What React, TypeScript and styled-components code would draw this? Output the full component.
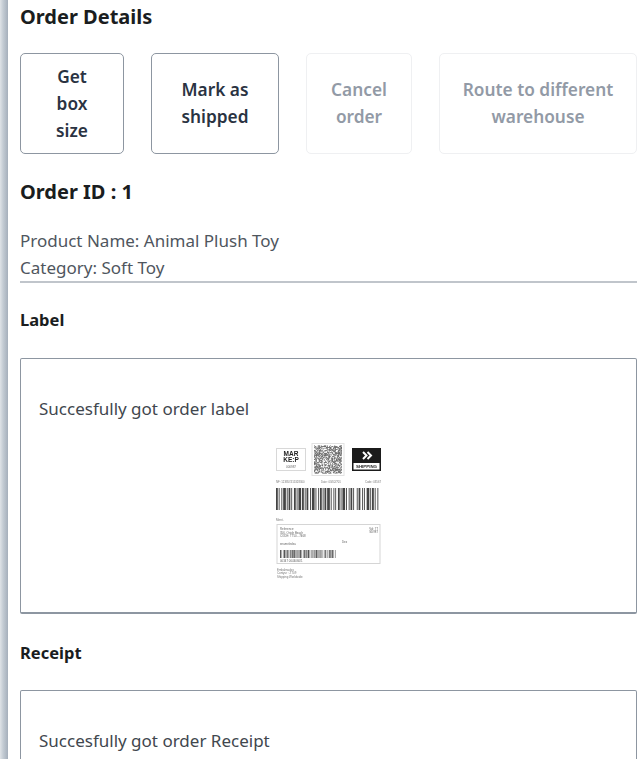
import React from 'react';
import styled, { createGlobalStyle } from 'styled-components';

const GlobalStyle = createGlobalStyle`
  html, body {
    margin: 0;
    padding: 0;
    height: 100%;
    overflow: hidden;
    background: #fff;
  }
  body {
    font-family: "Noto Sans", "Open Sans", sans-serif;
    color: #212529;
  }
`;

const Page = styled.div`
  height: 759px;
  overflow: hidden;
  box-sizing: border-box;
  padding: 0 3px 0 20px;
  position: relative;
  &::before {
    content: '';
    position: absolute;
    left: 0;
    top: 0;
    bottom: 0;
    width: 8px;
    background: linear-gradient(90deg, #dfe3e7 0%, #c3cbd3 40%, #a5afbb 100%);
  }
`;

const Title = styled.h1`
  margin: 0;
  padding-top: 4px;
  font-size: 20px;
  line-height: 26px;
  font-weight: 700;
  color: #1a1d20;
`;

const ButtonRow = styled.div`
  display: flex;
  gap: 27px;
  margin-top: 23px;
`;

const ActionButton = styled.button<{ $width: number; $narrow?: boolean }>`
  box-sizing: border-box;
  width: ${(p) => p.$width}px;
  height: 101px;
  padding: ${(p) => (p.$narrow ? '0 26px' : '0 12px 2px')};
  background: #fff;
  border: 1px solid ${(p) => (p.disabled ? '#eff0f2' : '#8d96a1')};
  border-radius: 5px;
  font-family: inherit;
  font-size: 17.3px;
  font-weight: 600;
  line-height: 27px;
  color: ${(p) => (p.disabled ? '#929aa6' : '#2a3342')};
`;

const OrderId = styled.h2`
  margin: 25px 0 0;
  font-size: 20px;
  line-height: 26px;
  font-weight: 700;
  color: #1a1d20;
`;

const Info = styled.div`
  margin-top: 22px;
  border-bottom: 2px solid #c0c5cb;
  font-size: 17px;
  line-height: 27px;
  color: #4f565e;
`;

const SectionLabel = styled.h3<{ $top: number }>`
  margin: ${(p) => p.$top}px 0 0;
  font-size: 16.5px;
  line-height: 24px;
  font-weight: 700;
  color: #1a1d20;
`;

const ResultBox = styled.div<{ $height: number; $top: number }>`
  box-sizing: border-box;
  height: ${(p) => p.$height}px;
  margin-top: ${(p) => p.$top}px;
  padding: 38px 18px 0;
  background: #fff;
  border: 1px solid #8d96a1;
  border-bottom-width: 2px;
  border-radius: 2px;
`;

const ResultText = styled.p`
  margin: 0;
  font-size: 17px;
  line-height: 24px;
  color: #41474e;
`;

const LabelWrap = styled.div`
  display: flex;
  justify-content: center;
  margin-top: 22px;
  svg {
    filter: blur(0.45px);
  }
`;

const barWidths = [
  2, 1, 1, 2, 1, 1, 3, 1, 1, 1, 2, 1, 1, 2, 2, 1, 1, 1, 3, 1, 2, 1, 1, 1, 2, 2, 1, 1, 3, 1, 1, 2, 1, 1, 2, 1, 1, 1, 2, 1, 3, 1, 1, 2, 1, 1,
  1, 2, 2, 1, 1, 1, 3, 1, 1, 2, 1, 1, 2, 1, 1, 3, 1, 1, 2, 2, 1, 1, 1, 2, 3, 1, 1, 1, 2, 1, 1, 2, 1, 3,
];

function Barcode({ x, y, w, h, color }: { x: number; y: number; w: number; h: number; color: string }) {
  const total = barWidths.reduce((a, b) => a + b, 0);
  let pos = 0;
  const scale = w / total;
  return (
    <g>
      {barWidths.map((bw, i) => {
        const cur = pos;
        pos += bw;
        if (i % 2) return null;
        return <rect key={i} x={x + cur * scale} y={y} width={bw * scale} height={h} fill={color} />;
      })}
    </g>
  );
}

function QrCode({ x, y, size }: { x: number; y: number; size: number }) {
  const n = 37;
  const cell = size / n;
  const cells: React.ReactNode[] = [];
  let seed = 77;
  for (let r = 0; r < n; r++) {
    for (let c = 0; c < n; c++) {
      seed = (seed * 1103515245 + 12345) & 0x7fffffff;
      if ((seed >> 16) % 2) {
        cells.push(<rect key={r + '-' + c} x={x + c * cell} y={y + r * cell} width={cell} height={cell} fill="#333" />);
      }
    }
  }
  return <g>{cells}</g>;
}

function ShippingLabel() {
  return (
    <svg width="106" height="138" viewBox="0 0 106 138">
      <rect x="0.5" y="5.5" width="29" height="22" fill="#fff" stroke="#d8d8d8" />
      <text x="15" y="13" fontSize="6.5" fontWeight="700" textAnchor="middle" fill="#222" fontFamily="Liberation Sans">MAR</text>
      <text x="15" y="19" fontSize="6.5" fontWeight="700" textAnchor="middle" fill="#222" fontFamily="Liberation Sans">KE:P</text>
      <text x="15" y="24.5" fontSize="3" textAnchor="middle" fill="#666" fontFamily="Liberation Sans">000987</text>

      <rect x="36" y="0.5" width="32" height="32" fill="#fff" stroke="#e2e2e2" />
      <QrCode x={38} y={2.5} size={28} />

      <rect x="76" y="5" width="29" height="23" fill="#1b1b1b" />
      <path d="M87 9 l3.5 3.5 -3.5 3.5 M91.5 9 l3.5 3.5 -3.5 3.5" fill="none" stroke="#fff" strokeWidth="2" />
      <rect x="77.5" y="20" width="26" height="6.5" fill="#fff" />
      <text x="90.5" y="25" fontSize="4.4" fontWeight="700" textAnchor="middle" fill="#222" fontFamily="Liberation Sans">SHIPPING</text>

      <g fontSize="2.8" fill="#777" fontFamily="Liberation Sans">
        <text x="0" y="40">NF: 123857415328300</text>
        <text x="45" y="40">Date: 03/02/701</text>
        <text x="105" y="40" textAnchor="end">Code: 03567</text>
      </g>
      <Barcode x={0} y={45} w={105} h={22} color="#444" />

      <text x="0" y="78" fontSize="3" fill="#777" fontFamily="Liberation Sans">Ment.</text>
      <rect x="1" y="81.5" width="103" height="39" fill="#fff" stroke="#d5d5d5" />
      <g fontSize="2.9" fill="#666" fontFamily="Liberation Sans">
        <text x="4" y="87">Reference:</text>
        <text x="4" y="90.5">356, Oriole Beach</text>
        <text x="4" y="94">CODE: TT50 - 7468</text>
        <text x="4" y="102">enameledsa</text>
        <text x="66" y="100">Dex</text>
        <text x="102" y="86.5" textAnchor="end">Vol: 77</text>
        <text x="102" y="90" textAnchor="end">SD987</text>
        <text x="4" y="119">00347 0044060/1</text>
      </g>
      <Barcode x={4} y={107} w={57} h={8} color="#555" />

      <g fontSize="2.9" fill="#777" fontFamily="Liberation Sans">
        <text x="1" y="127.5">Embalmados</text>
        <text x="1" y="131">Contyur : ZT09</text>
        <text x="1" y="134.5">Shipping Worldwide</text>
      </g>
    </svg>
  );
}

export default function App() {
  return (
    <Page>
      <GlobalStyle />
      <Title>Order Details</Title>
      <ButtonRow>
        <ActionButton $width={104} $narrow>Get box size</ActionButton>
        <ActionButton $width={128}>Mark as shipped</ActionButton>
        <ActionButton $width={106} disabled>Cancel order</ActionButton>
        <ActionButton $width={198} disabled>Route to different warehouse</ActionButton>
      </ButtonRow>
      <OrderId>Order ID : 1</OrderId>
      <Info>
        <div>Product Name: Animal Plush Toy</div>
        <div>Category: Soft Toy</div>
      </Info>
      <SectionLabel $top={25}>Label</SectionLabel>
      <ResultBox $height={256} $top={26}>
        <ResultText>Succesfully got order label</ResultText>
        <LabelWrap>
          <ShippingLabel />
        </LabelWrap>
      </ResultBox>
      <SectionLabel $top={27}>Receipt</SectionLabel>
      <ResultBox $height={200} $top={25}>
        <ResultText>Succesfully got order Receipt</ResultText>
      </ResultBox>
    </Page>
  );
}
